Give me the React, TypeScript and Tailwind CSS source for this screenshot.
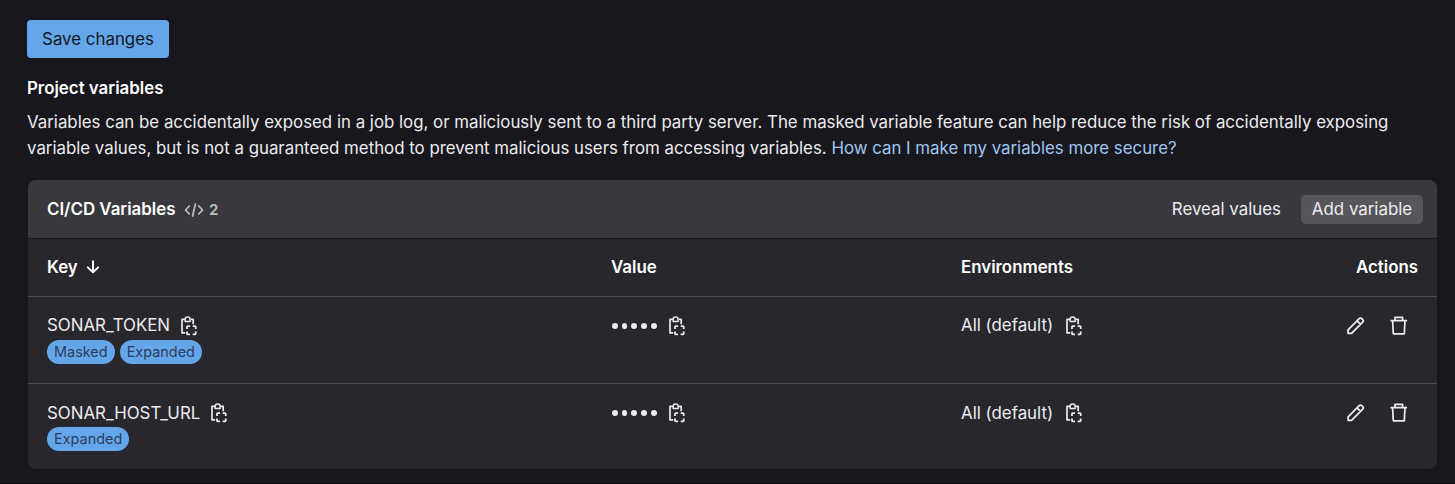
import type { ReactNode } from "react";

function CopyIcon() {
  return (
    <svg width="16" height="20" viewBox="0 0 16 20" fill="none" stroke="currentColor" strokeWidth="1.7" className="shrink-0">
      <path d="M4.2 16.9H1V3.4h3M9.4 3.4h2.8v4.8" strokeLinejoin="round" />
      <path d="M4.2 3.2v2.2h4.9V3.2a2.45 2.2 0 0 0-4.9 0z" strokeWidth="1.5" strokeLinejoin="round" />
      <path d="M6 13.1v-2.3a.7.7 0 0 1 .7-.7H9M11.7 10.1H14a.7.7 0 0 1 .7.7v2.3M14.7 15.6v2.1a.7.7 0 0 1-.7.7h-2.3M9 18.4H6.7a.7.7 0 0 1-.7-.7v-2.1" strokeWidth="1.8" />
    </svg>
  );
}

function CodeIcon() {
  return (
    <svg width="20" height="20" viewBox="0 0 20 20" fill="none" stroke="currentColor" strokeWidth="1.7" strokeLinecap="round" strokeLinejoin="round" className="shrink-0">
      <path d="M5.3 6 1.5 10l3.8 4M14.7 6l3.8 4-3.8 4M11.4 4 8.6 16" />
    </svg>
  );
}

function ArrowDown() {
  return (
    <svg width="14" height="14" viewBox="0 0 14 14" fill="none" stroke="currentColor" strokeWidth="2" strokeLinecap="round" strokeLinejoin="round" className="mb-px">
      <path d="M7 1.2v11M1.9 7.4 7 12.4l5.1-5" />
    </svg>
  );
}

function PencilIcon() {
  return (
    <svg width="20" height="20" viewBox="0 0 20 20" fill="none" stroke="currentColor" strokeWidth="1.8" strokeLinejoin="round">
      <path d="M2.1 17.3v-3.5L13.2 2.7a1.8 1.8 0 0 1 2.6 0l.9.9a1.8 1.8 0 0 1 0 2.6L5.6 17.3zM11.1 4.8l3.5 3.5" />
    </svg>
  );
}

function TrashIcon() {
  return (
    <svg width="20" height="20" viewBox="0 0 20 20" fill="none" stroke="currentColor" strokeWidth="1.7" strokeLinejoin="round">
      <path d="M1.5 4.6h16.6M6 4.6V1.4h7.6v3.2M3.6 4.6l.7 13.2h11L16 4.6" />
    </svg>
  );
}

function Badge({ children }: { children: ReactNode }) {
  return (
    <span className="flex h-6 items-center rounded-full bg-[#63a6e9] px-[7px] text-[14.45px] text-[#2f3d5c]">{children}</span>
  );
}

const COLS = "grid grid-cols-[564px_350px_1fr_auto] pl-[19px] pr-[19px]";

function Row({ name, tags, height, label }: { name: string; tags: string[]; height: string; label: string }) {
  return (
    <div className={`${COLS} ${height} border-t border-[#4c4b51] pt-[18px]`}>
      <div>
        <div className="flex h-[22px] items-center gap-[11px]">
          <span className={label}>{name}</span>
          <CopyIcon />
        </div>
        <div className="mt-[3px] flex gap-[5px]">
          {tags.map((t) => (
            <Badge key={t}>{t}</Badge>
          ))}
        </div>
      </div>
      <div className="flex h-[22px] items-center gap-[12.5px]">
        <span className="flex gap-[3.9px] pl-[1px]">
          {[0, 1, 2, 3, 4].map((i) => (
            <i key={i} className="size-[5.8px] rounded-full bg-[#ececef]" />
          ))}
        </span>
        <CopyIcon />
      </div>
      <div className="flex h-[22px] items-center gap-[13px]">
        <span className={label}>All (default)</span>
        <CopyIcon />
      </div>
      <div className="flex h-[22px] items-center gap-[23px] pr-[9px]">
        <PencilIcon />
        <TrashIcon />
      </div>
    </div>
  );
}

export default function App() {
  return (
    <div className="h-[484px] overflow-hidden border-b border-[#0e0d11] bg-[#18171d] pl-[27px] pr-[18px] pt-5 font-['Inter',sans-serif] text-[16.86px] text-[#ececef]">
      <button className="block h-[38px] w-[142px] rounded-[4px] bg-[#63a6e9] pt-[2px] text-[#18171d]">Save changes</button>
      <h2 className="mt-[17px] leading-[26px] font-semibold text-white">Project variables</h2>
      <p className="mt-2 text-[16.845px] leading-[26px] whitespace-nowrap">
        Variables can be accidentally exposed in a job log, or maliciously sent to a third party server. The masked variable feature can help reduce the risk of accidentally exposing
        <br />
        variable values, but is not a guaranteed method to prevent malicious users from accessing variables.{" "}
        <a className="text-[#9dc7f1]">How can I make my variables more secure?</a>
      </p>
      <section className="mt-[19px] ml-px h-[289px] overflow-hidden rounded-lg bg-[#28272d]">
        <header className="flex h-[59px] items-center border-b border-[#18171d] bg-[#3a383f] pl-[19px] pr-[14px]">
          <h3 className="pt-[2px] font-semibold text-white">CI/CD Variables</h3>
          <span className="ml-[9px] flex items-center gap-[4.5px] pt-[2px] text-[#bfbfc3]">
            <CodeIcon />
            <span className="text-[15.2px] font-semibold">2</span>
          </span>
          <button className="mr-5 ml-auto pt-[2px]">Reveal values</button>
          <button className="h-[29px] w-[122px] rounded-[5px] bg-[#58565d] pt-px">Add variable</button>
        </header>
        <div className={`${COLS} h-[57px] items-center font-semibold text-white`}>
          <div className="flex items-center gap-[8px]">
            Key
            <ArrowDown />
          </div>
          <div>Value</div>
          <div>Environments</div>
          <div>Actions</div>
        </div>
        <Row name="SONAR_TOKEN" tags={["Masked", "Expanded"]} height="h-[87px]" label="" />
        <Row name="SONAR_HOST_URL" tags={["Expanded"]} height="h-[86px]" label="pt-[2px]" />
      </section>
    </div>
  );
}
